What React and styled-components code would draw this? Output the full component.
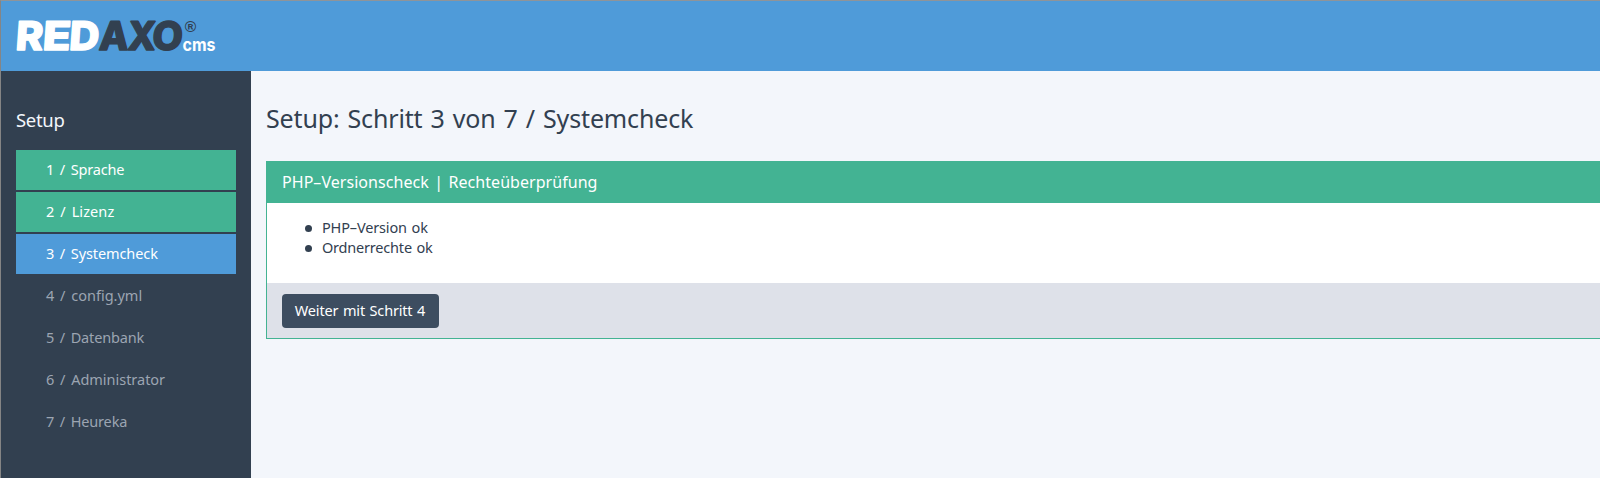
import React from "react";
import styled, { createGlobalStyle } from "styled-components";

const Global = createGlobalStyle`
  * { box-sizing: border-box; }
  body { margin: 0; background: #f3f6fb; color: #324050; font-family: "Noto Sans", "Open Sans", sans-serif; overflow: hidden; }
`;
const Page = styled.div`
  height: 478px;
  display: flex;
  flex-direction: column;
  border-top: 1px solid #8f9499;
  border-left: 1px solid #858585;
`;
const Header = styled.header`
  height: 70px;
  flex: none;
  background: #4f9bd9;
  padding: 11px 0 0 11px;
`;
const Logo = styled.svg`
  display: block;
  overflow: visible;
`;
const Columns = styled.div`
  flex: 1;
  display: flex;
`;
const Sidebar = styled.nav`
  width: 250px;
  flex: none;
  background: #324050;
  padding: 36px 15px 0;
`;
const Label = styled.span`
  display: inline-block;
  white-space: pre;
  letter-spacing: ${(p) => p.$letter || 0}px;
  word-spacing: ${(p) => p.$word || 0}px;
`;
const SideTitle = styled.h2`
  margin: 0 0 18px;
  font-size: 18.5px;
  font-weight: 400;
  line-height: 25px;
  color: #f3f6fb;
`;
const Steps = styled.ol`
  list-style: none;
  margin: 0;
  padding: 0;
  display: flex;
  flex-direction: column;
  gap: 2px;
`;
const stepColors = { done: "#43b393", current: "#4f9bd9", open: "transparent" };
const Step = styled.li`
  height: 40px;
  padding-left: 30px;
  font-size: 14.5px;
  line-height: 38px;
  background: ${(p) => stepColors[p.$state]};
  color: ${(p) => (p.$state === "open" ? "#9ca5b2" : "#ffffff")};
`;
const Main = styled.main`
  flex: 1;
  min-width: 0;
  padding: 30px 0 0 15px;
`;
const Title = styled.h1`
  margin: 0 0 25px;
  font-size: 25px;
  font-weight: 400;
  line-height: 35px;
`;
const Panel = styled.section`
  border: 1px solid #43b393;
  border-width: 0 0 1px 1px;
  background: #fff;
`;
const PanelHead = styled.header`
  height: 42px;
  padding-left: 15px;
  font-size: 16px;
  line-height: 42px;
  color: #fff;
  background: #43b393;
`;
const Checks = styled.ul`
  margin: 0;
  height: 80px;
  padding: 14px 0 0 38px;
  list-style: none;
  font-size: 14.5px;
  line-height: 20px;
`;
const Check = styled.li`
  display: flex;
  align-items: center;
  gap: 10px;
  &::before {
    content: "";
    width: 7px;
    height: 7px;
    margin-top: 2px;
    border-radius: 50%;
    background: #324050;
  }
`;
const PanelFoot = styled.footer`
  height: 55px;
  padding: 11px 15px;
  background: #dee1e9;
`;
const Button = styled.button`
  display: block;
  height: 34px;
  width: 157px;
  padding: 0 1px 2px 0;
  border: 0;
  border-radius: 4px;
  background: #3d4d60;
  color: #fff;
  font: 14.5px/32px "Noto Sans", sans-serif;
`;

const steps = [
  ["1 / Sprache", "done", -0.15],
  ["2 / Lizenz", "done", 0.1],
  ["3 / Systemcheck", "current", -0.1],
  ["4 / config.yml", "open", 0],
  ["5 / Datenbank", "open", -0.15],
  ["6 / Administrator", "open", -0.02],
  ["7 / Heureka", "open", -0.15],
];

const RedaxoLogo = () => (
  <Logo width="212" height="52" viewBox="12 12 212 52" role="img" aria-label="REDAXO cms">
    <g fontFamily="Inter, sans-serif" fontWeight="800" fontSize="39.5" strokeLinejoin="round">
      <g transform="translate(15 50.4) skewX(-4)" strokeWidth="1.4">
        <g fill="#fff" stroke="#fff">
          <text x="0" y="0" textLength="27.5" lengthAdjust="spacingAndGlyphs">R</text>
          <text x="27" y="0" textLength="28" lengthAdjust="spacingAndGlyphs">E</text>
          <text x="53.5" y="0" textLength="30" lengthAdjust="spacingAndGlyphs">D</text>
        </g>
        <g fill="#324050" stroke="#324050">
          <text x="83.5" y="0" textLength="29.5" lengthAdjust="spacingAndGlyphs">A</text>
          <text x="112" y="0" textLength="28" lengthAdjust="spacingAndGlyphs">X</text>
          <text x="136.5" y="0" textLength="30.5" lengthAdjust="spacingAndGlyphs">O</text>
        </g>
      </g>
      <text x="182.5" y="50.5" fill="#fff" fontSize="18" fontWeight="700" textLength="33" lengthAdjust="spacingAndGlyphs">cms</text>
      <text x="184.8" y="31.6" fill="#324050" fontFamily="Liberation Sans, sans-serif" fontSize="15" fontWeight="700" textLength="11.5" lengthAdjust="spacingAndGlyphs">®</text>
    </g>
  </Logo>
);

export default function App() {
  return (
    <>
      <Global />
      <Page>
        <Header><RedaxoLogo /></Header>
        <Columns>
          <Sidebar>
            <SideTitle><Label $letter={-0.3}>Setup</Label></SideTitle>
            <Steps>
              {steps.map(([text, state, letter]) => (
                <Step key={text} $state={state}><Label $letter={letter} $word={2}>{text}</Label></Step>
              ))}
            </Steps>
          </Sidebar>
          <Main>
            <Title><Label $letter={-0.15} $word={1.7}>Setup: Schritt 3 von 7 / Systemcheck</Label></Title>
            <Panel>
              <PanelHead><Label $letter={0.05} $word={1.2}>PHP–Versionscheck | Rechteüberprüfung</Label></PanelHead>
              <Checks>
                <Check><Label $letter={-0.15} $word={1}>PHP–Version ok</Label></Check>
                <Check><Label $letter={-0.2} $word={1}>Ordnerrechte ok</Label></Check>
              </Checks>
              <PanelFoot><Button><Label $letter={-0.17} $word={1}>Weiter mit Schritt 4</Label></Button></PanelFoot>
            </Panel>
          </Main>
        </Columns>
      </Page>
    </>
  );
}
